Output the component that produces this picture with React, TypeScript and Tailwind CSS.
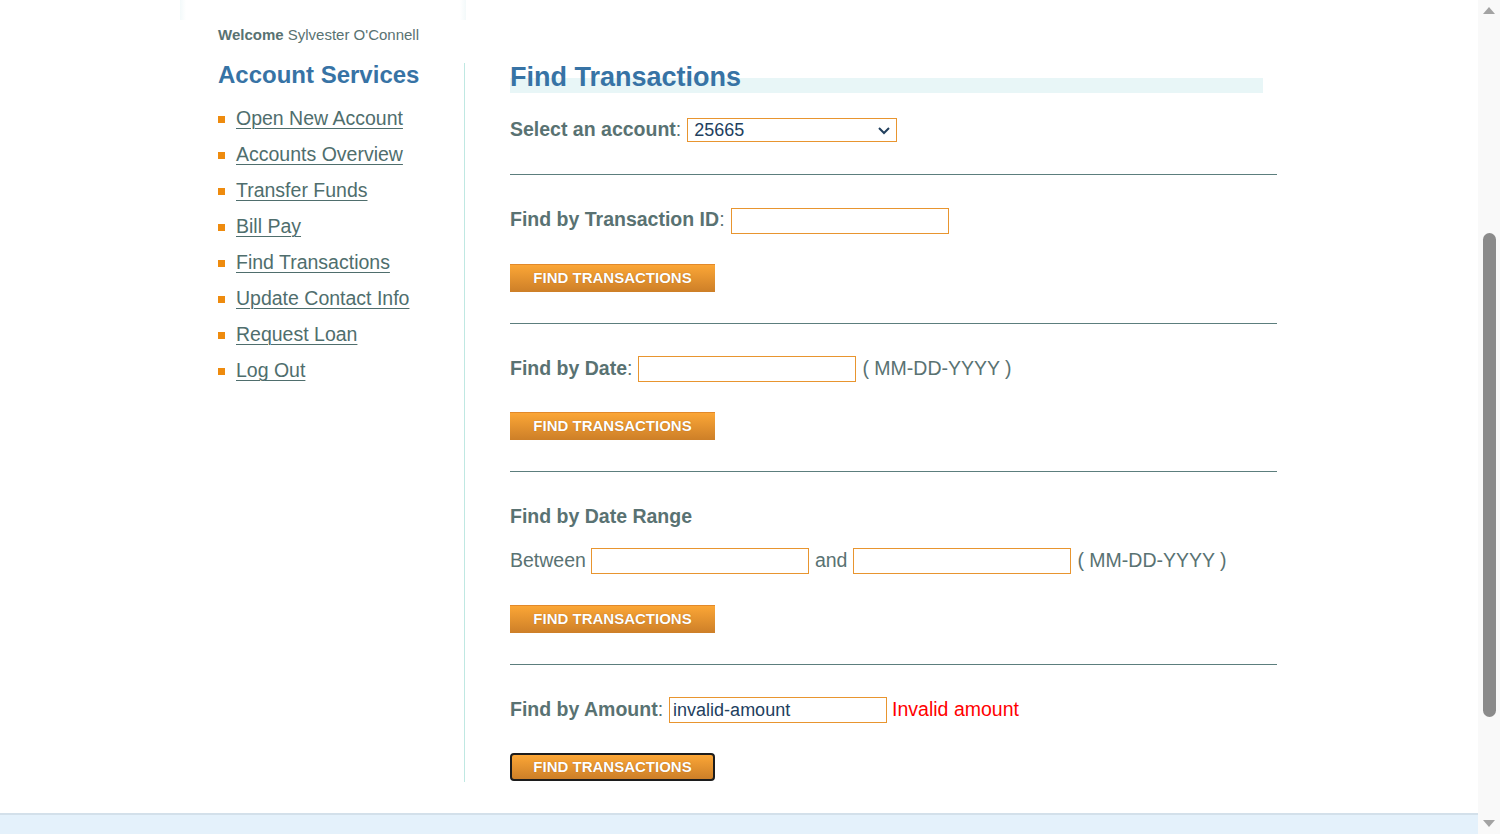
const links = [
  'Open New Account',
  'Accounts Overview',
  'Transfer Funds',
  'Bill Pay',
  'Find Transactions',
  'Update Contact Info',
  'Request Loan',
  'Log Out',
];

function FindButton({ focused = false, className = '' }: { focused?: boolean; className?: string }) {
  const edge = focused ? 'rounded-[4px] border-2 border-[#1c1c1c]' : 'border-t border-[#e2892a]';
  return (
    <button
      type="button"
      className={`flex h-[28px] w-[205px] items-center justify-center bg-[linear-gradient(to_bottom,#fba636,#cd7f28)] text-[15px] font-bold uppercase text-white [text-shadow:0_0_1px_rgba(120,60,0,0.6)] ${edge} ${className}`}
    >
      Find Transactions
    </button>
  );
}

function TextInput({ value = '', className = '' }: { value?: string; className?: string }) {
  return (
    <input
      type="text"
      readOnly
      value={value}
      className={`h-[26px] w-[218px] border border-[#e8952f] bg-white px-[3px] text-[18px] text-[#22405e] outline-none ${className}`}
    />
  );
}

function Divider({ className = '' }: { className?: string }) {
  return <div className={`h-px w-[767px] bg-[#5c7e7d] ${className}`} />;
}

function Scrollbar() {
  return (
    <div className="flex w-[22px] flex-col items-center bg-[#f9f9f9]">
      <svg width="14" height="10" viewBox="0 0 14 10" className="mt-[5px]">
        <path d="M1 9 L7 2 L13 9 Z" fill="#a3a3a3" />
      </svg>
      <div className="mt-[218px] h-[484px] w-[13px] rounded-full bg-[#8b8b8b]" />
      <div className="flex-1" />
      <svg width="14" height="10" viewBox="0 0 14 10" className="mb-[5px]">
        <path d="M1 1 L13 1 L7 8 Z" fill="#a3a3a3" />
      </svg>
    </div>
  );
}

export default function App() {
  return (
    <div className="flex h-[834px] w-[1500px] overflow-hidden bg-white font-['Liberation_Sans',Arial,sans-serif] text-[#597272]">
      <div className="flex min-w-0 flex-1 flex-col">
        <div className="relative flex flex-1 pl-[218px]">
          {/* faint edge of the header block above */}
          <div className="absolute left-[180px] top-0 h-[20px] w-[286px] bg-[linear-gradient(to_right,#eef7f8,#ffffff_6px,#ffffff_280px,#eef7f8)] opacity-70" />

          <aside className="relative w-[246px] pt-[27px]">
            <p className="text-[15px] leading-[16px]">
              <b>Welcome</b> Sylvester O'Connell
            </p>
            <h2 className="mt-[18px] text-[24px] font-bold leading-[28px] text-[#3773a5]">Account Services</h2>
            <ul className="mt-[12px]">
              {links.map((link) => (
                <li key={link} className="flex h-[36px] items-center text-[19.5px]">
                  <span className="mr-[11px] h-[7px] w-[7px] bg-[#ee8b0e]" />
                  <a href="#" className="text-[#4f6e6d] underline decoration-1 underline-offset-[3px]">
                    {link}
                  </a>
                </li>
              ))}
            </ul>
          </aside>

          <section className="mt-[63px] h-[719px] border-l border-[#bfe8e2] pl-[45px]">
            <h1 className="-mt-[2px] h-[32px] w-[753px] bg-[linear-gradient(to_bottom,transparent_17px,#e8f6f7_17px)] text-[27px] font-bold leading-[32px] text-[#3773a5]">
              Find Transactions
            </h1>

            <div className="mt-[25px] flex h-[24px] items-center text-[19.5px]">
              <span>
                <b>Select an account</b>:
              </span>
              <div className="ml-[6px] flex h-[24px] w-[210px] items-center justify-between border border-[#e8952f] pl-[6px] pr-[5px] text-[18px] text-[#22405e]">
                <span>25665</span>
                <svg width="14" height="9" viewBox="0 0 14 9">
                  <path d="M2 2 L7 7 L12 2" fill="none" stroke="#22405e" strokeWidth="2" />
                </svg>
              </div>
            </div>

            <Divider className="mt-[32px]" />

            <div className="mt-[33px] flex h-[26px] items-center text-[19.5px]">
              <span className="mb-[3px]">
                <b>Find by Transaction ID</b>:
              </span>
              <TextInput className="ml-[6px]" />
            </div>
            <FindButton className="mt-[30px]" />

            <Divider className="mt-[31px]" />

            <div className="mt-[32px] flex h-[26px] items-center text-[19.5px]">
              <span>
                <b>Find by Date</b>:
              </span>
              <TextInput className="ml-[6px]" />
              <span className="ml-[6px]">( MM-DD-YYYY )</span>
            </div>
            <FindButton className="mt-[30px]" />

            <Divider className="mt-[31px]" />

            <h3 className="mt-[32px] text-[19.5px] font-bold leading-[24px]">Find by Date Range</h3>
            <div className="mt-[20px] flex h-[26px] items-center text-[19.5px]">
              <span>Between</span>
              <TextInput className="ml-[5px]" />
              <span className="ml-[6px]">and</span>
              <TextInput className="ml-[6px]" />
              <span className="ml-[6px]">( MM-DD-YYYY )</span>
            </div>
            <FindButton className="mt-[31px]" />

            <Divider className="mt-[31px]" />

            <div className="mt-[32px] flex h-[26px] items-center text-[19.5px]">
              <span>
                <b>Find by Amount</b>:
              </span>
              <TextInput value="invalid-amount" className="ml-[6px]" />
              <span className="ml-[5px] text-[#ff0000]">Invalid amount</span>
            </div>
            <FindButton focused className="mt-[30px]" />
          </section>
        </div>
        <div className="h-[21px] border-t-2 border-[#d3e0ea] bg-[#e4f1fb]" />
      </div>
      <Scrollbar />
    </div>
  );
}
